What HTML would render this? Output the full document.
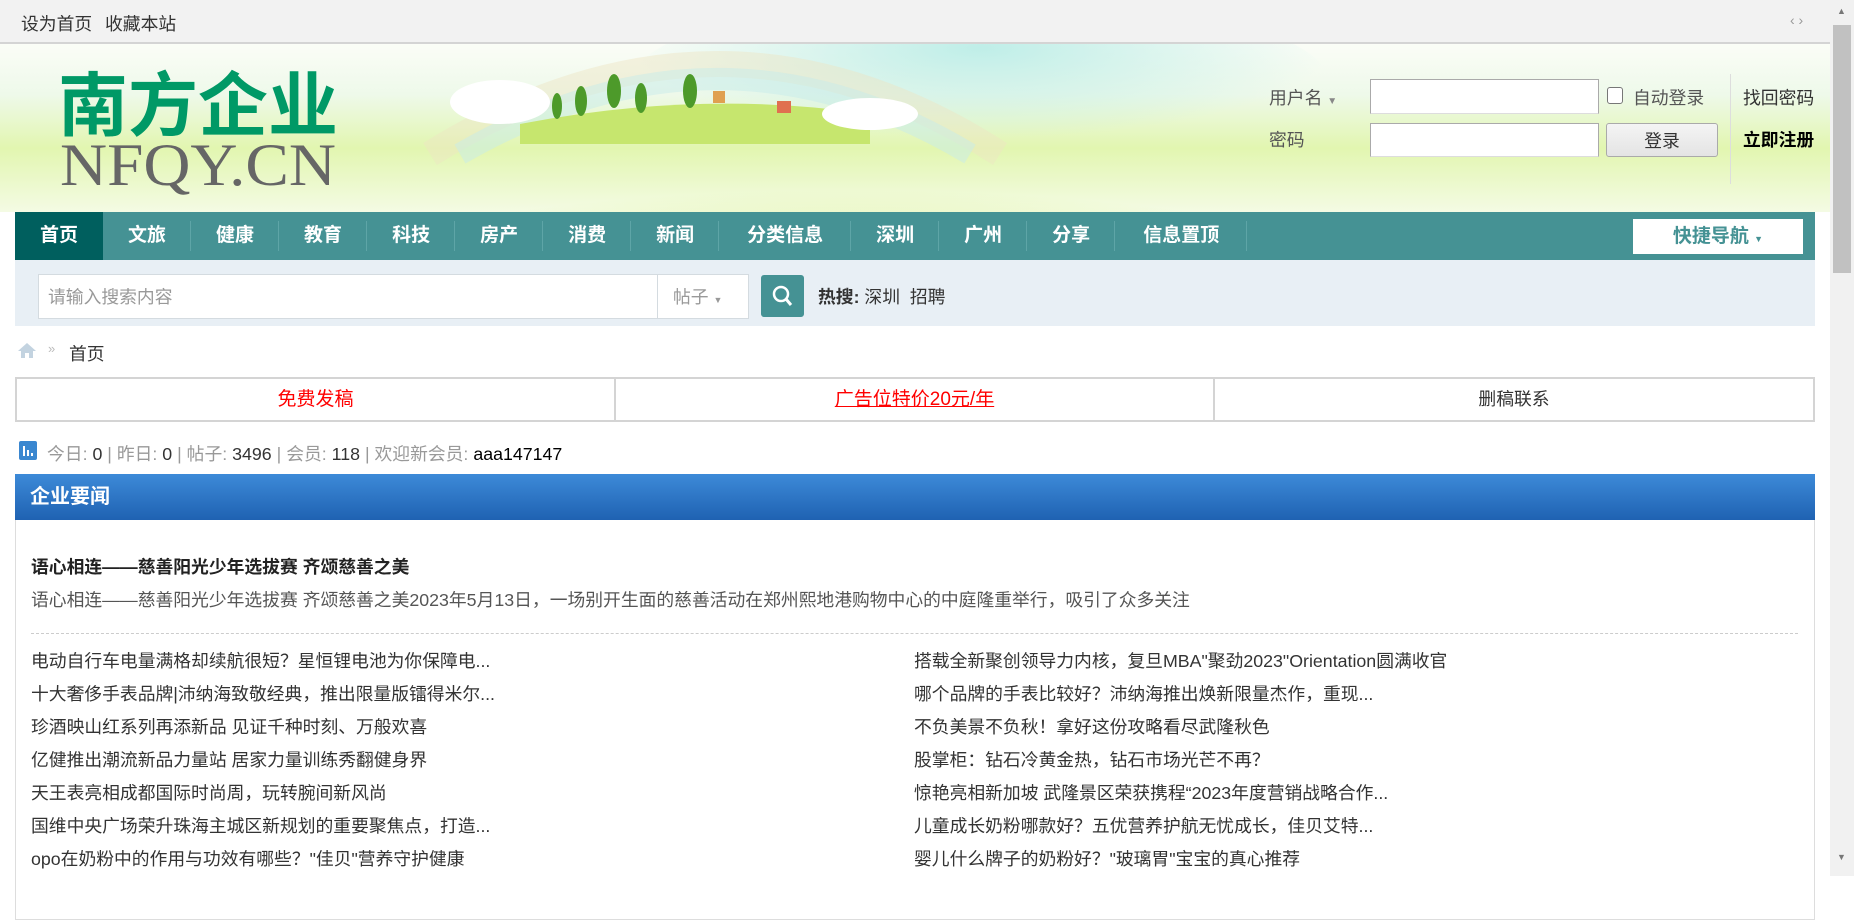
<!DOCTYPE html>
<html><head><meta charset="utf-8"><style>
*{margin:0;padding:0;box-sizing:border-box}
body{width:1854px;height:876px;overflow:hidden;background:#fff;font-family:"Liberation Sans","Noto Sans CJK SC",sans-serif;font-size:17.8px;color:#333;position:relative}
.abs{position:absolute}
#top{left:0;top:0;width:1830px;height:44px;background:#f2f2f2;border-bottom:2px solid #d4d4d4}
#top span{position:absolute;top:10px;font-size:17.8px;color:#333}
#sb{left:1830px;top:0;width:24px;height:876px;background:#f1f1f1}
#hdr{left:0;top:44px;width:1830px;height:168px;background:linear-gradient(180deg,#fbfdf7 0%,#eef9ea 30%,#e2f6b0 62%,#f4fbe4 100%)}
.nav{left:15px;top:212px;width:1800px;height:48px;background:#459294}
.nav a{float:left;height:48px;line-height:48px;padding:0 25px;color:#fff;font-weight:bold;font-size:19px;text-decoration:none;position:relative}
.nav a.w{padding:0 28px}
.nav a:after{content:"";position:absolute;right:0;top:9px;height:30px;border-right:1px solid #5ea5a7}
.nav a.on{background:#005f5e}
.nav a.on:after{display:none}
.srch{left:15px;top:260px;width:1800px;height:66px;background:#e8eff5}
.box3{top:377px;height:45px;border:2px solid #d4d4d4;text-align:center;line-height:41px}
.li{position:absolute;color:#333;white-space:nowrap}
</style></head><body>
<div id="top" class="abs"><span style="left:21px">设为首页</span><span style="left:105px">收藏本站</span><span style="left:1790px;color:#999;font-size:14px;top:12px">‹ ›</span></div>
<div id="sb" class="abs"><div style="position:absolute;left:3px;top:25px;width:18px;height:248px;background:#c1c1c1"></div><div style="position:absolute;left:7px;top:6px;font-size:9px;color:#777">▲</div><div style="position:absolute;left:7px;top:852px;font-size:9px;color:#777">▼</div></div>
<div id="hdr" class="abs">
<svg width="1830" height="168" style="position:absolute;left:0;top:0">
<defs><radialGradient id="g1" cx="0.5" cy="1" r="0.6"><stop offset="0" stop-color="#c9ec5a"/><stop offset="1" stop-color="#c9ec5a" stop-opacity="0"/></radialGradient>
<radialGradient id="g2" cx="0.5" cy="0.3" r="0.5"><stop offset="0" stop-color="#bfeee8"/><stop offset="1" stop-color="#bfeee8" stop-opacity="0"/></radialGradient></defs>
<ellipse cx="980" cy="40" rx="350" ry="90" fill="url(#g2)"/>
<path d="M430 110 Q720 -70 1000 110" stroke="#eee4c4" stroke-width="26" fill="none" opacity=".45"/>
<path d="M460 110 Q720 -40 970 110" stroke="#c8ecea" stroke-width="22" fill="none" opacity=".5"/>
<ellipse cx="850" cy="168" rx="520" ry="110" fill="url(#g1)"/>
<path d="M520 80 Q700 45 870 70 L870 100 L520 100Z" fill="#c6e66e"/>
<ellipse cx="500" cy="58" rx="50" ry="22" fill="#fff"/><ellipse cx="870" cy="70" rx="48" ry="16" fill="#fff"/>
<g fill="#4d9a2a"><ellipse cx="557" cy="62" rx="5" ry="13"/><ellipse cx="581" cy="57" rx="6" ry="15"/><ellipse cx="614" cy="47" rx="7" ry="17"/><ellipse cx="641" cy="54" rx="6" ry="15"/><ellipse cx="690" cy="47" rx="7" ry="17"/></g>
<rect x="713" y="47" width="12" height="12" fill="#e0a050"/><rect x="777" y="57" width="14" height="12" fill="#e07050"/>
<text x="58" y="86" font-family="Liberation Sans,Noto Sans CJK SC,sans-serif" font-weight="bold" font-size="70" fill="#009966">南方企业</text>
<text x="60" y="141" font-family="Liberation Serif,serif" font-size="60" fill="#666" textLength="276" lengthAdjust="spacingAndGlyphs">NFQY.CN</text>
</svg>
<div class="abs" style="left:1269px;top:40px;color:#555">用户名 <span style="font-size:10px;color:#888">▼</span></div>
<div class="abs" style="left:1370px;top:35px;width:229px;height:35px;background:#fff;border:1px solid #aaa;border-bottom-color:#ddd"></div>
<div class="abs" style="left:1607px;top:43px;width:16px;height:17px;border:1px solid #777;border-radius:3px;background:#fff"></div>
<div class="abs" style="left:1633px;top:40px;color:#555">自动登录</div>
<div class="abs" style="left:1730px;top:30px;height:110px;border-left:1px solid #ddd"></div>
<div class="abs" style="left:1743px;top:40px;color:#333">找回密码</div>
<div class="abs" style="left:1269px;top:82px;color:#555">密码</div>
<div class="abs" style="left:1370px;top:79px;width:229px;height:34px;background:#fff;border:1px solid #aaa;border-bottom-color:#ddd"></div>
<div class="abs" style="left:1606px;top:79px;width:112px;height:34px;background:linear-gradient(#f4f4f4,#e4e4e4);border:1px solid #aaa;border-radius:3px;text-align:center;line-height:34px;color:#333">登录</div>
<div class="abs" style="left:1743px;top:82px;color:#000;font-weight:bold">立即注册</div>
</div>
<div class="nav abs"><a class="on">首页</a><a>文旅</a><a>健康</a><a>教育</a><a>科技</a><a>房产</a><a>消费</a><a>新闻</a><a class="w">分类信息</a><a>深圳</a><a>广州</a><a>分享</a><a class="w">信息置顶</a>
<div style="position:absolute;left:1618px;top:7px;width:170px;height:35px;background:#fff;color:#459294;font-weight:bold;font-size:19px;text-align:center;line-height:35px">快捷导航 <span style="font-size:9px">▼</span></div></div>
<div class="srch abs">
<div class="abs" style="left:23px;top:14px;width:711px;height:45px;background:#fff;border:1px solid #d4dbe0"></div>
<div class="abs" style="left:33px;top:23px;color:#999">请输入搜索内容</div>
<div class="abs" style="left:642px;top:14px;height:45px;border-left:1px solid #d4dbe0"></div>
<div class="abs" style="left:658px;top:23px;color:#999">帖子 <span style="font-size:9px">▼</span></div>
<div class="abs" style="left:746px;top:15px;width:43px;height:42px;background:#459294;border-radius:3px"><svg width="43" height="42"><circle cx="20" cy="19" r="7" stroke="#fff" stroke-width="2.5" fill="none"/><path d="M25 24 L30 30" stroke="#fff" stroke-width="3"/></svg></div>
<div class="abs" style="left:803px;top:23px;color:#333"><b>热搜:</b> 深圳 &nbsp;招聘</div>
</div>
<svg class="abs" style="left:17px;top:342px" width="20" height="17"><path d="M10 1 L19 9 L16 9 L16 16 L12 16 L12 11 L8 11 L8 16 L4 16 L4 9 L1 9Z" fill="#c3d3e0"/></svg>
<div class="abs" style="left:48px;top:341px;color:#bbb;font-size:13px">»</div>
<div class="abs" style="left:69px;top:340px">首页</div>
<div class="box3 abs" style="left:15px;width:601px;color:#f00;font-size:19px">免费发稿</div>
<div class="box3 abs" style="left:614px;width:601px;color:#f00;font-size:19px;text-decoration:underline">广告位特价20元/年</div>
<div class="box3 abs" style="left:1213px;width:602px;color:#333">删稿联系</div>
<div class="abs" style="left:19px;top:441px;width:18px;height:19px;background:#3a87d0;border-radius:2px"><svg width="18" height="19"><path d="M5 5v10M9 9v6M13 12v3" stroke="#fff" stroke-width="2"/></svg></div>
<div class="abs" style="left:47px;top:440px;color:#999;white-space:nowrap">今日: <span style="color:#333">0</span> | 昨日: <span style="color:#333">0</span> | 帖子: <span style="color:#333">3496</span> | 会员: <span style="color:#333">118</span> | 欢迎新会员: <span style="color:#000">aaa147147</span></div>
<div class="abs" style="left:15px;top:474px;width:1800px;height:46px;background:linear-gradient(#3d8ad8,#1f62b2);color:#fff;font-weight:bold;font-size:20px;line-height:46px;padding-left:15px">企业要闻</div>
<div class="abs" style="left:15px;top:520px;width:1800px;height:400px;border:1px solid #ddd;border-top:none"></div>
<div class="abs" style="left:31px;top:553px;font-weight:bold;color:#222">语心相连——慈善阳光少年选拔赛 齐颂慈善之美</div>
<div class="abs" style="left:31px;top:586px;color:#555">语心相连——慈善阳光少年选拔赛 齐颂慈善之美2023年5月13日，一场别开生面的慈善活动在郑州熙地港购物中心的中庭隆重举行，吸引了众多关注</div>
<div class="abs" style="left:31px;top:633px;width:1767px;border-top:1px dashed #ccc"></div>
<div class="li" style="left:31px;top:647px">电动自行车电量满格却续航很短？星恒锂电池为你保障电...</div>
<div class="li" style="left:31px;top:680px">十大奢侈手表品牌|沛纳海致敬经典，推出限量版镭得米尔...</div>
<div class="li" style="left:31px;top:713px">珍酒映山红系列再添新品 见证千种时刻、万般欢喜</div>
<div class="li" style="left:31px;top:746px">亿健推出潮流新品力量站 居家力量训练秀翻健身界</div>
<div class="li" style="left:31px;top:779px">天王表亮相成都国际时尚周，玩转腕间新风尚</div>
<div class="li" style="left:31px;top:812px">国维中央广场荣升珠海主城区新规划的重要聚焦点，打造...</div>
<div class="li" style="left:31px;top:845px">opo在奶粉中的作用与功效有哪些？"佳贝"营养守护健康</div>
<div class="li" style="left:914px;top:647px">搭载全新聚创领导力内核，复旦MBA"聚劲2023"Orientation圆满收官</div>
<div class="li" style="left:914px;top:680px">哪个品牌的手表比较好？沛纳海推出焕新限量杰作，重现...</div>
<div class="li" style="left:914px;top:713px">不负美景不负秋！拿好这份攻略看尽武隆秋色</div>
<div class="li" style="left:914px;top:746px">股掌柜：钻石冷黄金热，钻石市场光芒不再？</div>
<div class="li" style="left:914px;top:779px">惊艳亮相新加坡 武隆景区荣获携程“2023年度营销战略合作...</div>
<div class="li" style="left:914px;top:812px">儿童成长奶粉哪款好？五优营养护航无忧成长，佳贝艾特...</div>
<div class="li" style="left:914px;top:845px">婴儿什么牌子的奶粉好？"玻璃胃"宝宝的真心推荐</div>
</body></html>
